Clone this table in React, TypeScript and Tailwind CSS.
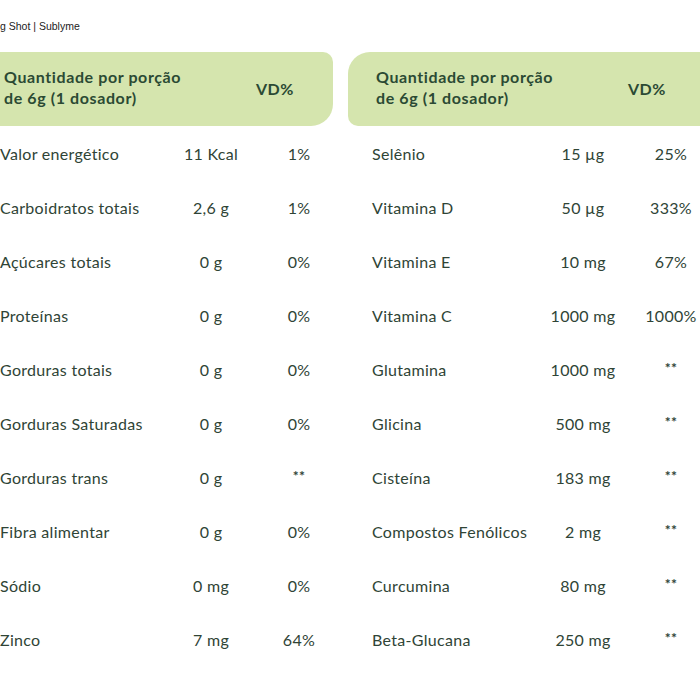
import React from 'react';

const left = [
  ['Valor energético', '11 Kcal', '1%'],
  ['Carboidratos totais', '2,6 g', '1%'],
  ['Açúcares totais', '0 g', '0%'],
  ['Proteínas', '0 g', '0%'],
  ['Gorduras totais', '0 g', '0%'],
  ['Gorduras Saturadas', '0 g', '0%'],
  ['Gorduras trans', '0 g', '**'],
  ['Fibra alimentar', '0 g', '0%'],
  ['Sódio', '0 mg', '0%'],
  ['Zinco', '7 mg', '64%'],
];

const right = [
  ['Selênio', '15 µg', '25%'],
  ['Vitamina D', '50 µg', '333%'],
  ['Vitamina E', '10 mg', '67%'],
  ['Vitamina C', '1000 mg', '1000%'],
  ['Glutamina', '1000 mg', '**'],
  ['Glicina', '500 mg', '**'],
  ['Cisteína', '183 mg', '**'],
  ['Compostos Fenólicos', '2 mg', '**'],
  ['Curcumina', '80 mg', '**'],
  ['Beta-Glucana', '250 mg', '**'],
];

function Table({ rows, side }: { rows: string[][]; side: 'left' | 'right' }) {
  const headRound = side === 'left' ? 'rounded-tr-[10px] rounded-br-[22px]' : 'rounded-tl-[22px] rounded-bl-[10px]';
  return (
    <div className="w-[357px] shrink-0">
      <div className={`h-[74px] bg-[#d5e5ae] ${headRound} flex items-center pl-[28px] text-[16px] font-bold tracking-[0.6px] leading-[21px] text-[#2b4a34]`}>
        <div className="w-[233px] -translate-y-[2px]">
          Quantidade por porção
          <br />
          de 6g (1 dosador)
        </div>
        <div className="w-[76px] text-center -translate-y-px">VD%</div>
      </div>
      <div className="pt-px">
        {rows.map((r, i) => (
          <div key={i} className="h-[54px] grid grid-cols-[161px_100px_76px] items-center pl-[24px] text-[16px] tracking-[0.3px] text-[#2f4436]">
            <span className="whitespace-nowrap">{r[0]}</span>
            <span className="text-center whitespace-nowrap">{r[1]}</span>
            <span className={`text-center ${r[2] === '**' ? 'text-[14px] font-bold -translate-y-[3px]' : ''}`}>{r[2]}</span>
          </div>
        ))}
      </div>
    </div>
  );
}

export default function App() {
  return (
    <div className="w-[700px] h-[700px] overflow-hidden bg-white" style={{ fontFamily: 'Lato, "Open Sans", sans-serif' }}>
      <div className="pt-[20px] h-[52px] text-[10.5px] leading-[13px] text-[#222]" style={{ fontFamily: '"Liberation Sans", Arial, sans-serif' }}>
        g Shot | Sublyme
      </div>
      <div className="flex gap-[15px] ml-[-24px]">
        <Table rows={left} side="left" />
        <Table rows={right} side="right" />
      </div>
    </div>
  );
}
